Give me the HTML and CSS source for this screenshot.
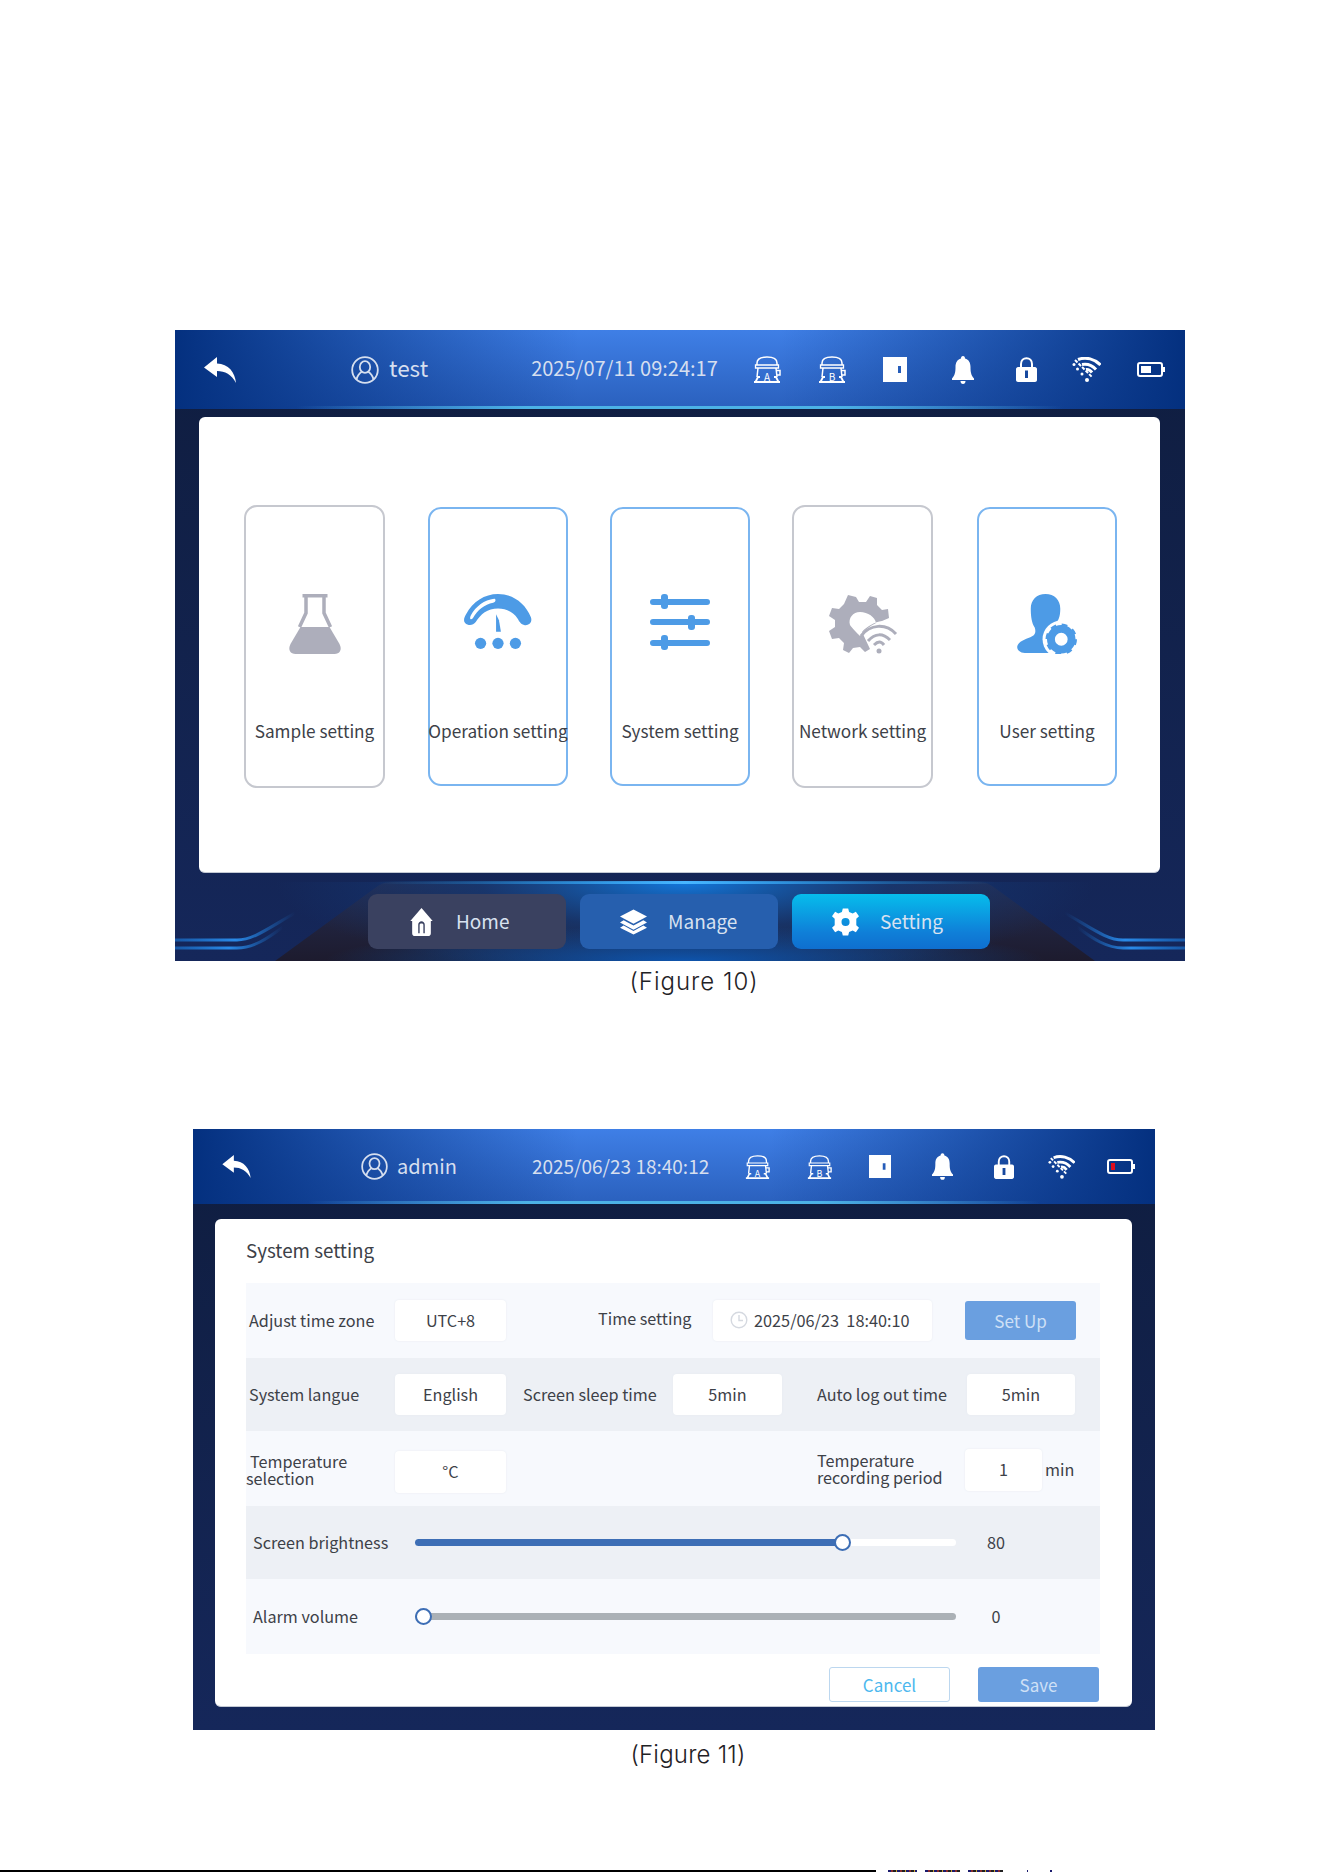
FILE: index.html
```html
<!DOCTYPE html>
<html lang="en">
<head>
    <meta charset="UTF-8">
    <meta name="viewport" content="width=device-width, initial-scale=1.0">
    <title>Figure 10 and Figure 11</title>
    <link rel="stylesheet" href="styles.css">
</head>
<body>
    <!-- shared status bar icons -->
    <svg class="sprite" aria-hidden="true">
        <symbol id="i-back" viewBox="0 0 32 26">
            <path d="M13 0 0 10.500 13 20V14C21 14 27.500 17.500 32 26 31 15 24.500 7 13 6.500Z" fill="#fff"/>
        </symbol>
        <symbol id="i-user" viewBox="0 0 28 28">
            <g fill="none" stroke="currentColor" stroke-width="1.800">
                <circle cx="14" cy="14" r="12.800"/>
                <ellipse cx="14" cy="11" rx="5.200" ry="5.800"/>
                <path d="M5.500 23.500C6.500 19 9.500 16.500 11 15.500M22.500 23.500C21.500 19 18.500 16.500 17 15.500"/>
            </g>
        </symbol>
        <symbol id="i-comp" viewBox="0 0 28 27">
            <g fill="none" stroke="#fff" stroke-width="1.500">
                <path d="M4 9V7C4 3 8 1 14 1S24 3 24 7V9"/>
                <path d="M2.500 9H25.500V12H2.500Z" stroke-width="1.300"/>
                <path d="M5 12 4 21M23 12 24 21M24 14.500H27V19H24"/>
                <path d="M1 26H27M2.500 26 5 21H7M25.500 26 23 21H21" stroke-width="1.800"/>
            </g>
        </symbol>
        <symbol id="i-door" viewBox="0 0 24 25">
            <path fill-rule="evenodd" d="M0 0H24V25H0ZM15 9V16H18V9Z" fill="#fff"/>
        </symbol>
        <symbol id="i-bell" viewBox="0 0 22 28">
            <path d="M11 0C12.500 0 13 1 13 2.500 17 3.500 18.500 7 18.500 11 18.500 16 19 19 22 22.500V24H0V22.500C3 19 3.500 16 3.500 11 3.500 7 5 3.500 9 2.500 9 1 9.500 0 11 0Z" fill="#fff"/>
            <path d="M8.500 25H13.500C13.500 27 12.500 28 11 28S8.500 27 8.500 25Z" fill="#fff"/>
        </symbol>
        <symbol id="i-lock" viewBox="0 0 21 25">
            <path d="M5 11V7C5 3.500 7.500 1.200 10.500 1.200S16 3.500 16 7V11" fill="none" stroke="#fff" stroke-width="2"/>
            <path fill-rule="evenodd" d="M2 10H19C20 10 21 11 21 12V23C21 24 20 25 19 25H2C1 25 0 24 0 23V12C0 11 1 10 2 10ZM9 13.500V21H12V13.500Z" fill="#fff"/>
        </symbol>
        <symbol id="i-wifi" viewBox="0 0 29 25">
            <g fill="none" stroke="#fff" stroke-width="3">
                <path d="M6 2.500C14 -.5 23 2 28.500 8"/>
                <path d="M10 7.500C15.500 6.500 20.500 8.500 24 12.500"/>
                <path d="M14 12.500C16.500 12 18.500 13.500 20 15.500"/>
                <path d="M3 3 20 20" stroke-width="2" stroke-dasharray="3.500 1.500"/>
            </g>
            <circle cx="15" cy="23" r="2" fill="#fff"/>
            <circle cx="2" cy="7.500" r="1.500" fill="#fff"/>
            <circle cx="5.500" cy="12" r="1.500" fill="#fff"/>
            <circle cx="10" cy="17" r="1.500" fill="#fff"/>
        </symbol>
        <symbol id="i-clock" viewBox="0 0 18 18">
            <g fill="none" stroke="#d5d9e0" stroke-width="1.400">
                <circle cx="9" cy="9" r="7.800"/>
                <path d="M9 4V9.500H13"/>
            </g>
        </symbol>
    </svg>

    <main class="page">
        <section class="screen screen-one">
            <header class="bar">
                <svg class="back"><use href="#i-back"/></svg>
                <svg class="avatar"><use href="#i-user"/></svg>
                <span class="who">test</span>
                <span class="clock">2025/07/11 09:24:17</span>
                <div class="status">
                    <svg class="st comp" viewBox="0 0 28 27"><use href="#i-comp"/><text class="comp-tag" x="14" y="25">A</text></svg>
                    <svg class="st comp" viewBox="0 0 28 27"><use href="#i-comp"/><text class="comp-tag" x="14" y="25">B</text></svg>
                    <svg class="st door"><use href="#i-door"/></svg>
                    <svg class="st bell"><use href="#i-bell"/></svg>
                    <svg class="st lock"><use href="#i-lock"/></svg>
                    <svg class="st wifi"><use href="#i-wifi"/></svg>
                    <div class="batt"><span class="batt-fill"></span></div>
                </div>
            </header>
            <div class="panel menu-panel">
                <a class="tile tile-off">
                    <svg class="tile-icon" viewBox="0 0 51 60">
                        <path d="M13 0H38V3.500H13Z" fill="#adaebb"/>
                        <path d="M16.500 3V19L10 33M34.500 3V19L41 33" fill="none" stroke="#adaebb" stroke-width="3.500"/>
                        <path d="M11 33H40L50 50C53 56 50 60 45 60H6C1 60 -2 56 1 50Z" fill="#adaebb"/>
                    </svg>
                    <span>Sample setting</span>
                </a>
                <a class="tile tile-on">
                    <svg class="tile-icon" viewBox="0 0 70 62">
                        <path fill-rule="evenodd" d="M35 0C50 0 63 9 69 24 71 30 66 33 62 32 58 31 57 28 55 25 51 19 44 15 35 15 24 15 17 21 12 29 9 33 4 33 1 30-1 28 0 24 2 21 9 8 21 0 35 0ZM31 5C21 6 12 13 7 22 5 26 7 27 9 25 14 16 21 11 30 9 33 8 33 5 31 5Z" fill="#4d9be6"/>
                        <path d="M33 21 36 27 38 39H33Z" fill="#4d9be6"/>
                        <circle cx="17" cy="51" r="5.800" fill="#4d9be6"/>
                        <circle cx="35" cy="51" r="5.800" fill="#4d9be6"/>
                        <circle cx="53" cy="51" r="5.800" fill="#4d9be6"/>
                    </svg>
                    <span>Operation setting</span>
                </a>
                <a class="tile tile-on">
                    <svg class="tile-icon" viewBox="-2 0 64 60">
                        <g fill="none" stroke="#4d9be6" stroke-width="6" stroke-linecap="round">
                            <path d="M3 8H57M3 28H57M3 49H57"/>
                        </g>
                        <rect x="11" y="0" width="7" height="15" rx="3" fill="#4d9be6"/>
                        <rect x="38" y="21" width="7" height="15" rx="3" fill="#4d9be6"/>
                        <rect x="11" y="41" width="7" height="15" rx="3" fill="#4d9be6"/>
                    </svg>
                    <span>System setting</span>
                </a>
                <a class="tile tile-off">
                    <svg class="tile-icon" viewBox="0 0 68 60">
                        <path fill-rule="evenodd" d="M19 1 27 3 30 8H37L41 2 48 4 48 11 53 16 59 15 60 24 53 27C46 28 38 32 33 38L41 55 36 58 31 53 24 54 20 59 14 56 15 49 10 44 3 45 0 37 6 33V26L0 22 3 14 10 15 15 10ZM31 18C24 18 19 24 21 31 23 34 28 39 31 42 35 36 41 32 47 29 46 23 39 18 31 18Z" fill="#adaebb"/>
                        <g fill="none" stroke="#adaebb" stroke-width="3">
                            <path d="M32 42C41 30 57 29 67 40"/>
                            <path d="M39 47C46 39 54 39 61 46"/>
                            <path d="M45 51C49 47 52 47 55 51"/>
                        </g>
                        <circle cx="50" cy="57" r="2.500" fill="#adaebb"/>
                    </svg>
                    <span>Network setting</span>
                </a>
                <a class="tile tile-on">
                    <svg class="tile-icon" viewBox="0 0 61 61">
                        <path d="M29 0C38 0 44 6 44 15 44 23 42 28 38 32L46 36V60H8C1 60-2 54 2 50 6 46 13 45 17 42 19 40 19 37 18 34 15 30 14 23 14 15 14 6 20 0 29 0Z" fill="#4d9be6"/>
                        <circle cx="45" cy="46" r="19" fill="#fff"/>
                        <rect x="0" y="60" width="61" height="1" fill="#fff"/>
                        <g fill="none" stroke="#4d9be6">
                            <circle cx="45" cy="46" r="10.500" stroke-width="8"/>
                            <circle cx="45" cy="46" r="14.500" stroke-width="3" stroke-dasharray="5.700 5.690"/>
                        </g>
                    </svg>
                    <span>User setting</span>
                </a>
            </div>
            <footer class="dock">
                <svg class="dock-bg" viewBox="0 0 1010 88" preserveAspectRatio="none" aria-hidden="true">
                    <defs>
                        <linearGradient id="dock-fill" x1="0" y1="0" x2="0" y2="1">
                            <stop offset="0" stop-color="#242c50"/>
                            <stop offset="1" stop-color="#1d1b2e"/>
                        </linearGradient>
                        <radialGradient id="dock-glow" cx=".5" cy="0" r=".5" gradientTransform="scale(1 2.400)">
                            <stop offset="0" stop-color="#1378dc"/>
                            <stop offset=".5" stop-color="#143a78" stop-opacity=".7"/>
                            <stop offset="1" stop-color="#143a78" stop-opacity="0"/>
                        </radialGradient>
                        <radialGradient id="foot-glow" cx=".5" cy="1" r=".5" gradientTransform="translate(0 -.4) scale(1 1.400)">
                            <stop offset="0" stop-color="#0e54ac"/>
                            <stop offset="1" stop-color="#0e54ac" stop-opacity="0"/>
                        </radialGradient>
                        <linearGradient id="edge" x1="0" y1="0" x2="1" y2="0">
                            <stop offset="0" stop-color="#1b9bf0" stop-opacity="0"/>
                            <stop offset=".5" stop-color="#48b6ff"/>
                            <stop offset="1" stop-color="#1b9bf0" stop-opacity="0"/>
                        </linearGradient>
                        <linearGradient id="trail-l" x1="0" y1="0" x2="1" y2="0">
                            <stop offset="0" stop-color="#1a78d8" stop-opacity=".6"/>
                            <stop offset=".5" stop-color="#2a8ae8"/>
                            <stop offset="1" stop-color="#1a78d8" stop-opacity="0"/>
                        </linearGradient>
                        <linearGradient id="trail-r" x1="1" y1="0" x2="0" y2="0">
                            <stop offset="0" stop-color="#1a78d8" stop-opacity=".6"/>
                            <stop offset=".5" stop-color="#2a8ae8"/>
                            <stop offset="1" stop-color="#1a78d8" stop-opacity="0"/>
                        </linearGradient>
                    </defs>
                    <path d="M100 88 200 15Q207 9 216 9H804Q813 9 820 15L920 88Z" fill="url(#dock-fill)"/>
                    <rect x="100" y="9" width="820" height="79" fill="url(#dock-glow)"/>
                    <rect x="150" y="38" width="720" height="50" fill="url(#foot-glow)"/>
                    <rect x="200" y="8" width="620" height="3" fill="url(#edge)"/>
                    <g fill="none" stroke-width="3">
                        <path d="M0 67H62C78 67 92 56 120 40" stroke="url(#trail-l)"/>
                        <path d="M0 75H62C78 75 92 66 108 54" stroke="url(#trail-l)"/>
                        <path d="M1010 67H948C932 67 918 56 890 40" stroke="url(#trail-r)"/>
                        <path d="M1010 75H948C932 75 918 66 902 54" stroke="url(#trail-r)"/>
                    </g>
                </svg>
                <a class="dock-btn dock-home">
                    <svg viewBox="0 0 26 30"><path fill-rule="evenodd" d="M13 0 25 14H23V27C23 29 22 30 20 30H6C4 30 3 29 3 27V14H1ZM9.500 18V27H11V18C11 16 15 16 15 18V27H16.500V18C16.500 13 9.500 13 9.500 18Z" fill="#fff"/></svg>
                    <span>Home</span>
                </a>
                <a class="dock-btn dock-manage">
                    <svg viewBox="0 0 30 28"><path d="M15 0 30 8 15 16 0 8Z" fill="#fff"/><path d="M4 12 15 18 26 12 30 14.500 15 22.500 0 14.500Z" fill="#fff"/><path d="M4 18 15 24 26 18 30 20.500 15 28 0 20.500Z" fill="#fff"/></svg>
                    <span>Manage</span>
                </a>
                <a class="dock-btn dock-setting">
                    <svg viewBox="0 0 30 30"><path fill-rule="evenodd" d="M12 0H18L19 4 23 5.500 26.500 3.500 30 8.500 27 11.500V18.500L30 21.500 26.500 26.500 23 24.500 19 26 18 30H12L11 26 7 24.500 3.500 26.500 0 21.500 3 18.500V11.500L0 8.500 3.500 3.500 7 5.500 11 4ZM15 10.500A4.500 4.500 0 1 0 15.100 19.500 4.500 4.500 0 1 0 15 10.500Z" fill="#fff"/></svg>
                    <span>Setting</span>
                </a>
            </footer>
        </section>
        <p class="caption caption-one">(Figure 10)</p>

        <section class="screen screen-two">
            <header class="bar">
                <svg class="back"><use href="#i-back"/></svg>
                <svg class="avatar"><use href="#i-user"/></svg>
                <span class="who">admin</span>
                <span class="clock">2025/06/23 18:40:12</span>
                <div class="status">
                    <svg class="st comp" viewBox="0 0 28 27"><use href="#i-comp"/><text class="comp-tag" x="14" y="25">A</text></svg>
                    <svg class="st comp" viewBox="0 0 28 27"><use href="#i-comp"/><text class="comp-tag" x="14" y="25">B</text></svg>
                    <svg class="st door"><use href="#i-door"/></svg>
                    <svg class="st bell"><use href="#i-bell"/></svg>
                    <svg class="st lock"><use href="#i-lock"/></svg>
                    <svg class="st wifi"><use href="#i-wifi"/></svg>
                    <div class="batt batt-low"><span class="batt-fill"></span></div>
                </div>
            </header>
            <div class="panel form-panel">
                <h2 class="form-title">System setting</h2>
                <div class="rows">
                    <div class="row row-light row-time">
                        <label>Adjust time zone</label>
                        <div class="field f-zone">UTC+8</div>
                        <label class="time-label">Time setting</label>
                        <div class="field f-date">
                            <svg viewBox="0 0 18 18"><use href="#i-clock"/></svg>
                            2025/06/23&nbsp; 18:40:10
                        </div>
                        <a class="btn-fill btn-setup">Set Up</a>
                    </div>
                    <div class="row row-dark row-lang">
                        <label>System langue</label>
                        <div class="field f-zone">English</div>
                        <label class="sleep-label">Screen sleep time</label>
                        <div class="field f-sleep">5min</div>
                        <label class="auto-label">Auto log out time</label>
                        <div class="field f-auto">5min</div>
                    </div>
                    <div class="row row-light row-temp">
                        <label class="two-line"><span class="indent">Temperature</span><br>selection</label>
                        <div class="field f-zone f-unit">°C</div>
                        <label class="two-line period-label">Temperature<br>recording period</label>
                        <div class="field f-period">1</div>
                        <span class="unit">min</span>
                    </div>
                    <div class="row row-dark row-slide row-bright">
                        <label class="slide-label">Screen brightness</label>
                        <div class="track track-white">
                            <div class="track-fill" style="width: 79%"></div>
                            <span class="knob" style="left: 79%"></span>
                        </div>
                        <span class="slide-val">80</span>
                    </div>
                    <div class="row row-light row-slide">
                        <label class="slide-label">Alarm volume</label>
                        <div class="track track-grey">
                            <span class="knob knob-start"></span>
                        </div>
                        <span class="slide-val">0</span>
                    </div>
                </div>
                <div class="actions">
                    <a class="btn-line">Cancel</a>
                    <a class="btn-fill btn-save">Save</a>
                </div>
            </div>
        </section>
        <p class="caption caption-two">(Figure 11)</p>
    </main>

    <div class="page-edge">
        <span class="edge-solid"></span>
        <span class="edge-noise en1"></span>
        <span class="edge-noise en2"></span>
        <span class="edge-noise en3"></span>
        <span class="edge-noise en4"></span>
        <span class="edge-noise en5"></span>
    </div>
</body>
</html>
```

FILE: styles.css
```css
* {
    box-sizing: border-box;
}
html, body {
    margin: 0;
    background: #fff;
}
body {
    width: 1324px;
    height: 1872px;
    overflow: hidden;
    display: flex;
    flex-direction: column;
    font-family: "Noto Sans CJK SC", "Noto Sans", sans-serif;
}
.sprite {
    display: none;
}
.page {
    flex: 1;
    padding-top: 330px;
}

/* screens */
.screen {
    position: relative;
    background: linear-gradient(180deg, #0f1d3f 0%, #15275a 100%);
}
.screen-one {
    width: 1010px;
    height: 631px;
    margin-left: 175px;
}
.screen-two {
    width: 962px;
    height: 601px;
    margin: 133px 0 0 193px;
}

/* status bar */
.bar {
    display: flex;
    align-items: center;
    background:
        linear-gradient(90deg, #04307f 0%, rgba(4, 48, 127, 0) 40%, rgba(4, 48, 127, 0) 60%, #04307f 100%),
        linear-gradient(180deg, #3f7fe6 0%, #2a60bd 100%);
    color: #d6dfef;
    position: relative;
}
.bar::after {
    content: "";
    position: absolute;
    left: 12%;
    right: 12%;
    bottom: 0;
    height: 3px;
    background: linear-gradient(90deg, rgba(76, 178, 240, 0), #4cb2e6 30%, #4cb2e6 70%, rgba(76, 178, 240, 0));
}
.screen-one .bar {
    height: 79px;
    padding-left: 29px;
}
.screen-two .bar {
    height: 75px;
    padding-left: 29px;
}
.back {
    width: 32px;
    height: 26px;
}
.avatar {
    width: 28px;
    height: 28px;
    margin-left: 115px;
}
.who {
    font-size: 22.500px;
    margin-left: 10px;
    padding-bottom: 5px;
}
.clock {
    font-size: 20px;
    white-space: nowrap;
    padding-bottom: 5px;
}
.screen-one .clock {
    margin-left: 103px;
}
.screen-two .back {
    width: 29px;
    height: 23px;
}
.screen-two .avatar {
    width: 27px;
    height: 27px;
    margin-left: 110px;
}
.screen-two .who {
    font-size: 20px;
    margin-left: 9px;
    padding-bottom: 2px;
}
.screen-two .clock {
    margin-left: 75px;
    font-size: 19px;
    padding-bottom: 2px;
}
.status {
    position: absolute;
    top: 0;
    bottom: 0;
    display: grid;
    align-items: center;
    justify-items: center;
}
.screen-one .status {
    left: 560px;
    grid-template-columns: 64px 65px 62px 73px 55px 65px 62px;
}
.screen-two .status {
    left: 533px;
    grid-template-columns: 62px 62px 60px 64px 59px 57px 60px;
}
.st.comp { width: 28px; height: 27px; }
.st.door { width: 24px; height: 25px; }
.st.bell { width: 22px; height: 28px; }
.st.lock { width: 21px; height: 25px; }
.st.wifi { width: 29px; height: 25px; }
.comp-tag {
    font-size: 10px;
    fill: #fff;
    text-anchor: middle;
}
.screen-two .st.comp { width: 25px; height: 26px; }
.screen-two .st.door { width: 22px; height: 25px; }
.screen-two .st.bell { width: 21px; height: 27px; }
.screen-two .st.lock { width: 20px; height: 24px; }
.screen-two .st.wifi { width: 27px; height: 24px; }
.batt {
    width: 26px;
    height: 15px;
    border: 2px solid #fff;
    border-radius: 3px;
    padding: 2px;
    position: relative;
}
.batt::after {
    content: "";
    position: absolute;
    right: -4px;
    top: 3px;
    width: 2px;
    height: 5px;
    background: #fff;
}
.batt-fill {
    display: block;
    height: 100%;
    width: 58%;
    background: #fff;
}
.batt-low .batt-fill {
    width: 22%;
    background: #e00d1d;
}

/* white panels */
.panel {
    background: #fff;
    border-radius: 6px;
    border-bottom: 1px solid #c3c9d4;
}
.menu-panel {
    width: 961px;
    height: 456px;
    margin: 8px 0 0 24px;
    padding: 3px 0 0 45px;
    display: flex;
    align-items: center;
    gap: 42px;
}
.tile {
    width: 140px;
    height: 279px;
    border: 2px solid #7ab5f0;
    border-radius: 13px;
    display: flex;
    flex-direction: column;
    align-items: center;
    flex: none;
    white-space: nowrap;
    color: #3d4148;
    font-size: 17.200px;
    line-height: 26px;
}
.tile:nth-child(2) {
    margin-left: 1px;
}
.tile:last-child {
    margin-left: 2px;
}
.tile-icon {
    height: 60px;
    width: 70px;
    margin-top: 85px;
    margin-bottom: 64px;
    flex: none;
}
.tile-off {
    width: 141px;
    height: 283px;
    border-color: #c6c8cf;
}
.tile-off .tile-icon {
    margin-top: 87px;
}

/* bottom dock */
.dock {
    position: relative;
    height: 88px;
    display: flex;
    align-items: flex-start;
    padding: 21px 0 0 193px;
    gap: 14px;
}
.dock-bg {
    position: absolute;
    left: 0;
    top: 0;
    width: 100%;
    height: 100%;
}
.dock-btn {
    position: relative;
    width: 198px;
    height: 55px;
    border-radius: 9px;
    display: flex;
    align-items: center;
    color: #d8e2f0;
    font-size: 19px;
}
.dock-btn span {
    padding-bottom: 2px;
}
.dock-btn svg {
    width: 27px;
    height: 28px;
    flex: none;
    margin: 0 21px 0 40px;
}
.dock-home {
    background: #3a4160;
}
.dock-manage {
    background: #265fae;
}
.dock-setting {
    background: linear-gradient(180deg, #06bdec 0%, #0f7fd8 70%, #0f6fcf 100%);
}

/* form */
.form-panel {
    width: 917px;
    height: 488px;
    margin: 15px 0 0 22px;
    padding: 17px 0 0 31px;
    color: #3d4148;
}
.form-title {
    margin: 0;
    font-weight: 400;
    font-size: 18.800px;
    line-height: 28px;
    color: #3d4148;
}
.rows {
    width: 854px;
    margin-top: 19px;
}
.row {
    display: flex;
    align-items: center;
    font-size: 16.200px;
    white-space: nowrap;
}
.row-light {
    background: #f7f9fd;
}
.row-dark {
    background: #edf0f5;
}
.row-time {
    height: 75px;
}
.row-lang {
    height: 73px;
}
.row-temp {
    height: 75px;
}
.row-slide {
    height: 75px;
}
.row-bright {
    height: 73px;
}
.row label {
    width: 149px;
    padding: 0 0 2px 3px;
    flex: none;
}
.field {
    height: 41px;
    padding-bottom: 2px;
    background: #fff;
    border-radius: 4px;
    box-shadow: 0 0 2px #e6e9ef;
    display: flex;
    align-items: center;
    justify-content: center;
    color: #3d4148;
}
.f-zone {
    width: 111px;
}
.f-unit {
    height: 42px;
    margin-top: 7px;
}
.f-date {
    width: 219px;
    gap: 6px;
    justify-content: flex-start;
    padding-left: 17px;
    font-size: 16.300px;
}
.f-date svg {
    width: 18px;
    height: 18px;
}
.row .time-label {
    width: 96px;
    margin-left: 92px;
    margin-right: 19px;
    padding: 0 0 2px;
    margin-top: -4px;
}
.btn-fill {
    background: #6a9fe0;
    color: #cfe0f6;
    border-radius: 3px;
    display: flex;
    align-items: center;
    justify-content: center;
    font-size: 17px;
}
.btn-setup {
    width: 111px;
    height: 39px;
    margin-left: 33px;
}
.row .sleep-label {
    width: 140px;
    margin-left: 17px;
    margin-right: 10px;
    padding: 0 0 2px;
}
.f-sleep {
    width: 109px;
}
.row .auto-label {
    width: 132px;
    margin-left: 35px;
    margin-right: 18px;
    padding: 0 0 2px;
}
.f-auto {
    width: 108px;
}
.row .two-line {
    padding: 0;
    line-height: 17px;
    margin-top: 2px;
}
.indent {
    margin-left: 4px;
}
.row .period-label {
    width: 140px;
    margin-left: 311px;
    margin-right: 8px;
    margin-top: 0;
}
.f-period {
    width: 77px;
    height: 42px;
    margin-top: 3px;
}
.unit {
    margin-left: 3px;
}
.row .slide-label {
    width: 169px;
    padding: 0 0 2px 7px;
}
.track {
    position: relative;
    width: 541px;
    height: 7px;
    border-radius: 4px;
}
.track-white {
    background: #fff;
}
.track-grey {
    background: #abb1b6;
}
.track-fill {
    height: 100%;
    background: #3d6eb5;
    border-radius: 4px;
}
.knob {
    position: absolute;
    top: 50%;
    width: 17px;
    height: 17px;
    margin: -8.500px 0 0 -8.500px;
    background: #fff;
    border: 2.500px solid #3d6eb5;
    border-radius: 50%;
}
.knob-start {
    left: 8px;
}
.slide-val {
    width: 80px;
    text-align: center;
    padding-bottom: 2px;
}
.actions {
    display: flex;
    justify-content: flex-end;
    gap: 28px;
    width: 853px;
    margin-top: 13px;
}
.btn-line {
    width: 121px;
    height: 35px;
    border: 1px solid #bcd7ef;
    border-radius: 3px;
    color: #4db8ee;
    font-size: 17px;
    display: flex;
    align-items: center;
    justify-content: center;
}
.btn-save {
    width: 121px;
    height: 35px;
}

/* captions */
.caption {
    margin: 0;
    width: 1324px;
    font-family: Inter, sans-serif;
    font-weight: 300;
    font-size: 24px;
    line-height: 28px;
    color: #1f2226;
    text-align: center;
}
.caption-one {
    margin-top: 7px;
    padding-left: 64px;
    letter-spacing: 1px;
}
.caption-two {
    margin-top: 11px;
    padding-left: 52px;
    letter-spacing: .2px;
}

/* print noise along the last line */
.page-edge {
    display: flex;
    height: 2px;
    flex: none;
}
.edge-solid {
    width: 876px;
    background: #000;
}
.edge-noise {
    display: block;
    background: repeating-linear-gradient(90deg, #1b1b6e 0 3px, #8a2b2b 3px 5px, #202020 5px 8px, #c9a227 8px 9px);
}
.en1 { width: 29px; margin-left: 12px; }
.en2 { width: 35px; margin-left: 8px; }
.en3 { width: 35px; margin-left: 8px; }
.en4 { width: 1px; margin-left: 24px; }
.en5 { width: 2px; margin-left: 22px; }
```
